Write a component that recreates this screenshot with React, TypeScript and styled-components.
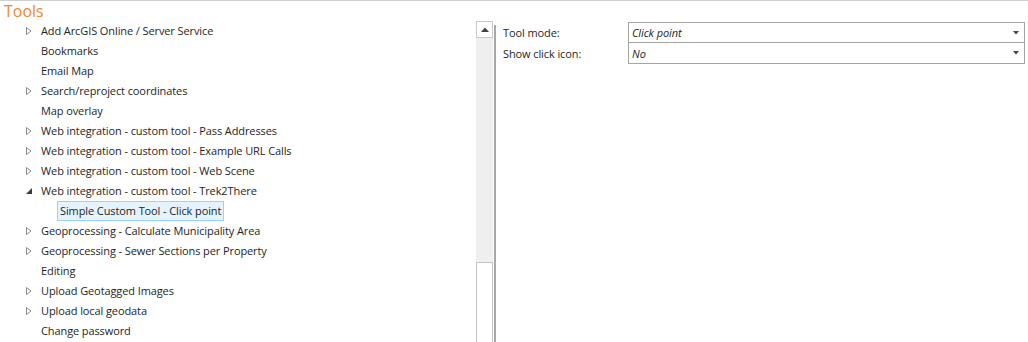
import React from "react";
import styled, { createGlobalStyle } from "styled-components";

interface TreeItem {
  label: string;
  expander?: "closed" | "open";
  level?: number;
  selected?: boolean;
}

const items: TreeItem[] = [
  { label: "Add ArcGIS Online / Server Service", expander: "closed" },
  { label: "Bookmarks" },
  { label: "Email Map" },
  { label: "Search/reproject coordinates", expander: "closed" },
  { label: "Map overlay" },
  { label: "Web integration - custom tool - Pass Addresses", expander: "closed" },
  { label: "Web integration - custom tool - Example URL Calls", expander: "closed" },
  { label: "Web integration - custom tool - Web Scene", expander: "closed" },
  { label: "Web integration - custom tool - Trek2There", expander: "open" },
  { label: "Simple Custom Tool - Click point", level: 1, selected: true },
  { label: "Geoprocessing - Calculate Municipality Area", expander: "closed" },
  { label: "Geoprocessing - Sewer Sections per Property", expander: "closed" },
  { label: "Editing" },
  { label: "Upload Geotagged Images", expander: "closed" },
  { label: "Upload local geodata", expander: "closed" },
  { label: "Change password" },
];

const GlobalStyle = createGlobalStyle`
  html, body {
    margin: 0;
    padding: 0;
    background: #ffffff;
    overflow: hidden;
  }
  body {
    font-family: "Open Sans", "Noto Sans", sans-serif;
    font-size: 11px;
    letter-spacing: -0.1px;
    color: #1e1e1e;
  }
`;

const Expander: React.FC<{ state?: "closed" | "open" }> = ({ state }) => {
  if (!state) return <ExpanderBox />;
  return (
    <ExpanderBox>
      {state === "closed" ? (
        <svg width="8" height="10" viewBox="0 0 8 10">
          <path d="M1.5 1.5 L6 5 L1.5 8.5 Z" fill="none" stroke="#8a8a8a" strokeWidth="1" />
        </svg>
      ) : (
        <svg width="8" height="10" viewBox="0 0 8 10">
          <path d="M1 8 L7 8 L7 2 Z" fill="#3c3c3c" />
        </svg>
      )}
    </ExpanderBox>
  );
};

const DropArrow = () => (
  <svg width="6" height="4" viewBox="0 0 6 4">
    <path d="M0 0 L6 0 L3 3.5 Z" fill="#444" />
  </svg>
);

const App: React.FC = () => {
  return (
    <Page>
      <GlobalStyle />
      <Title>Tools</Title>
      <Body>
        <TreePanel>
          {items.map((it) => (
            <Row key={it.label}>
              <Indent level={it.level ?? 0} />
              <Expander state={it.expander} />
              <Label selected={it.selected}>{it.label}</Label>
            </Row>
          ))}
        </TreePanel>
        <ScrollBar>
          <ScrollButton>
            <svg width="8" height="5" viewBox="0 0 8 5">
              <path d="M0 5 L8 5 L4 0.5 Z" fill="#404040" />
            </svg>
          </ScrollButton>
          <ScrollTrack />
          <ScrollThumb />
        </ScrollBar>
        <PropsPanel>
          <PropGrid>
            <PropLabel>Tool mode:</PropLabel>
            <Select first>
              <span>Click point</span>
              <DropArrow />
            </Select>
            <PropLabel>Show click icon:</PropLabel>
            <Select>
              <span>No</span>
              <DropArrow />
            </Select>
          </PropGrid>
        </PropsPanel>
      </Body>
    </Page>
  );
};

export default App;

const Page = styled.div`
  width: 1028px;
  height: 342px;
  border-top: 1px solid #cfcfcf;
  box-sizing: border-box;
  display: flex;
  flex-direction: column;
  overflow: hidden;
`;

const Title = styled.div`
  height: 20px;
  line-height: 20px;
  padding-left: 4px;
  font-size: 16px;
  letter-spacing: 0;
  color: #ec8a2e;
`;

const Body = styled.div`
  flex: 1;
  display: flex;
  min-height: 0;
`;

const TreePanel = styled.div`
  width: 476px;
  display: flex;
  flex-direction: column;
  overflow: hidden;
`;

const Row = styled.div`
  height: 20px;
  display: flex;
  align-items: center;
  padding-left: 24px;
  flex-shrink: 0;
`;

const Indent = styled.div<{ level: number }>`
  width: ${(p) => p.level * 19}px;
  flex-shrink: 0;
`;

const ExpanderBox = styled.div`
  width: 12px;
  height: 10px;
  display: flex;
  align-items: center;
  justify-content: flex-start;
  margin-left: 1px;
  margin-right: 1px;
`;

const Label = styled.div<{ selected?: boolean }>`
  white-space: nowrap;
  padding: 0 2px;
  height: 18px;
  line-height: 18px;
  border: 1px solid ${(p) => (p.selected ? "#99d1ff" : "transparent")};
  background: ${(p) => (p.selected ? "#e5f3ff" : "transparent")};
`;

const ScrollBar = styled.div`
  width: 17px;
  display: flex;
  flex-direction: column;
`;

const ScrollButton = styled.div`
  height: 17px;
  box-sizing: border-box;
  border: 1px solid #c8c8c8;
  background: #ffffff;
  display: flex;
  align-items: center;
  justify-content: center;
`;

const ScrollTrack = styled.div`
  height: 224px;
  background: #efefef;
`;

const ScrollThumb = styled.div`
  flex: 1;
  box-sizing: border-box;
  border: 1px solid #c4c4c4;
  border-bottom: none;
  background: #ffffff;
`;

const PropsPanel = styled.div`
  flex: 1;
  margin-left: 1px;
  margin-top: 4px;
  border-left: 2px solid #a8a8a8;
  padding-left: 7px;
`;

const PropGrid = styled.div`
  display: grid;
  grid-template-columns: 125px 397px;
  grid-auto-rows: 21px;
  margin-top: -3px;
`;

const PropLabel = styled.div`
  display: flex;
  align-items: center;
  color: #1e1e1e;
`;

const Select = styled.div<{ first?: boolean }>`
  box-sizing: border-box;
  border: 1px solid #a5a5a5;
  border-top: ${(p) => (p.first ? "1px solid #a5a5a5" : "none")};
  height: 21px;
  display: flex;
  align-items: center;
  justify-content: space-between;
  padding: 0 5px 0 3px;
  font-style: italic;
  color: #1e1e1e;
`;
